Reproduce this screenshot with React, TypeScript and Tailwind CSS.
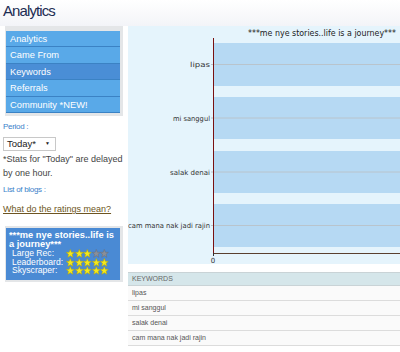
import React from 'react';

const navItems = ['Analytics', 'Came From', 'Keywords', 'Referrals', 'Community *NEW!'];
const keywords = ['lipas', 'mi sanggul', 'salak denai', 'cam mana nak jadi rajin'];

const Star = ({ on }: { on: boolean }) => (
    <svg width="8.6" height="9" viewBox="0 0 10 10">
        <polygon
            points="5,0.3 6.3,3.5 9.7,3.7 7.1,5.9 7.9,9.4 5,7.5 2.1,9.4 2.9,5.9 0.3,3.7 3.7,3.5"
            fill={on ? '#f4e81c' : '#8a8f99'}
            stroke={on ? '#b8a800' : '#6b6f77'}
            strokeWidth="0.6"
        />
    </svg>
);

const Stars = ({ count }: { count: number }) => (
    <div className="flex">
        {[0, 1, 2, 3, 4].map((i) => (
            <Star key={i} on={i < count} />
        ))}
    </div>
);

const App: React.FC = () => {
    // chart rows: bar top / bottom and label start inside the svg
    const bars = [
        { top: 17, bottom: 60, start: 62, len: 20 },
        { top: 71, bottom: 113, start: 45, len: 37 },
        { top: 125, bottom: 167, start: 42, len: 40 },
        { top: 178, bottom: 221, start: 0, len: 82 },
    ];

    const ratings: [string, number][] = [
        ['Large Rec:', 3],
        ['Leaderboard:', 5],
        ['Skyscraper:', 5],
    ];

    return (
        <div className="w-[400px] h-[352px] overflow-hidden bg-white font-['Liberation_Sans',Arial,sans-serif]">
            {/* header */}
            <div className="h-[26px] bg-gradient-to-b from-[#ffffff] to-[#f3f4f8] pl-[3px] pt-[1px]">
                <h1 className="text-[15px] leading-[20px] text-[#1d2c52] tracking-[-0.9px]">Analytics</h1>
            </div>

            <div className="flex">
                {/* left column */}
                <div className="w-[128px] pl-[3px] pr-[5px] shrink-0">
                    <div className="ml-[2px] bg-[#e4e6e8] pl-[1px] pr-[3px] pt-[5px] pb-[3px]">
                        {navItems.map((item, i) => (
                            <div
                                key={item}
                                className={`h-[16.4px] pl-[4px] text-[9.3px] leading-[16px] text-white border-b border-[#3b82c4] ${
                                    i === 2 ? 'bg-[#4a8ed6]' : 'bg-[#59a9e8]'
                                }`}
                            >
                                {item}
                            </div>
                        ))}
                    </div>

                    <div className="mt-[6px] text-[8px] leading-[10px] text-[#3c7fca] tracking-[-0.3px]">Period :</div>
                    <div className="mt-[5px] w-[53px] h-[14px] border border-[#c8c8c8] bg-white flex items-center justify-between pl-[3px] pr-[5px] text-[9.5px] text-[#222]">
                        <span>Today*</span>
                        <span className="text-[5px]">▼</span>
                    </div>
                    <div className="mt-[1px] text-[9px] leading-[14px] text-[#444]">
                        *Stats for "Today" are delayed
                        <br />
                        by one hour.
                    </div>

                    <div className="mt-[5px] text-[8px] leading-[10px] text-[#3c7fca] tracking-[-0.3px]">List of blogs :</div>
                    <div className="mt-[8px] text-[9px] leading-[12px] text-[#6d5521] underline">What do the ratings mean?</div>

                    <div className="mt-[11px] ml-[2px] bg-[#e4e6e8] pl-[1px] pr-[3px] py-[2px]">
                        <div className="bg-[#4a8ad4] pl-[3px] pt-[3px] pb-[5px] text-white">
                            <div className="text-[9.3px] leading-[8.6px] font-bold">***me nye stories..life is a journey***</div>
                            <div className="pl-[3px] mt-[1px] text-[8.6px] leading-[8.6px]">
                                {ratings.map(([label, n]) => (
                                    <div key={label} className="flex items-center h-[8.6px]">
                                        <span className="w-[54px]">{label}</span>
                                        <Stars count={n} />
                                    </div>
                                ))}
                            </div>
                        </div>
                    </div>
                </div>

                {/* right column */}
                <div className="flex-1">
                    <div className="h-[238px] bg-[#e5f4fc]">
                        <svg width="272" height="238" viewBox="0 0 272 238" className="block">
                            <text
                                x="120"
                                y="10"
                                textLength="148"
                                lengthAdjust="spacingAndGlyphs"
                                fontSize="8.2"
                                fill="#222"
                                fontFamily="DejaVu Sans, Verdana, sans-serif"
                            >
                                ***me nye stories..life is a journey***
                            </text>
                            {bars.map((b, i) => {
                                const mid = (b.top + b.bottom) / 2;
                                return (
                                    <g key={i}>
                                        <rect x="85" y={b.top} width="187" height={b.bottom - b.top} fill="#b6d9f3" />
                                        <line x1="83" y1={mid} x2="272" y2={mid} stroke="#b9c4cc" strokeWidth="1" />
                                        <text
                                            x={b.start}
                                            y={mid + 2.5}
                                            textLength={b.len}
                                            lengthAdjust="spacingAndGlyphs"
                                            fontSize="7"
                                            fill="#333"
                                            fontFamily="DejaVu Sans, Verdana, sans-serif"
                                        >
                                            {keywords[i]}
                                        </text>
                                    </g>
                                );
                            })}
                            <line x1="85.5" y1="12" x2="85.5" y2="228" stroke="#7a1010" strokeWidth="1" />
                            <line x1="85" y1="227.5" x2="272" y2="227.5" stroke="#5a4030" strokeWidth="1" />
                            <line x1="85.5" y1="227" x2="85.5" y2="230" stroke="#333" strokeWidth="1" />
                            <text x="85" y="237" textAnchor="middle" fontSize="7" fill="#333" fontFamily="DejaVu Sans, Verdana, sans-serif">
                                0
                            </text>
                        </svg>
                    </div>

                    <div className="mt-[8px] text-[7px] text-[#555]">
                        <div className="h-[14px] bg-[#d5e6ea] border-y border-[#c9d3d6] pl-[4px] leading-[12px] text-[#666]">KEYWORDS</div>
                        {keywords.map((k) => (
                            <div key={k} className="h-[15px] bg-[#fafafa] border-b border-[#dcdcdc] pl-[4px] leading-[14px]">
                                {k}
                            </div>
                        ))}
                    </div>
                </div>
            </div>
        </div>
    );
};

export default App;
